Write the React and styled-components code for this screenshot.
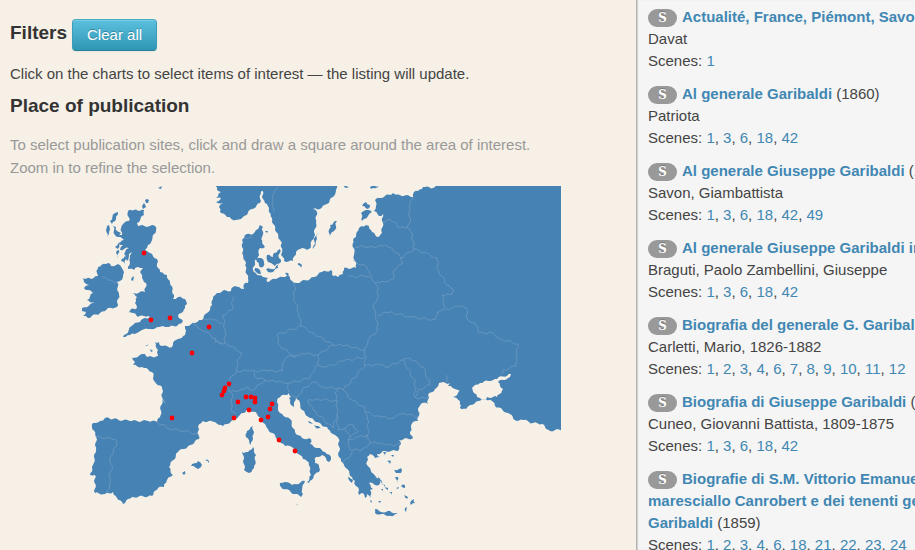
import React from "react";
import styled, { createGlobalStyle } from "styled-components";

const Global = createGlobalStyle`
  * { box-sizing: border-box; }
  body {
    margin: 0;
    background: #f6f0e6;
    color: #444;
    font: 15px/22px "Liberation Sans", Arial, sans-serif;
  }
`;

const Page = styled.div`
  display: grid;
  grid-template-columns: minmax(0, 1fr) 279px;
  height: 100vh;
  overflow: hidden;
`;

const Filters = styled.main`
  padding: 19px 10px 0;
`;

const Toolbar = styled.div`
  display: flex;
  align-items: flex-start;
  gap: 5px;
`;

const Heading = styled.h2`
  margin: 0;
  color: #333;
  font-size: 19px;
  line-height: 28px;
`;

const ClearButton = styled.button`
  height: 32px;
  padding: 0 14px;
  border: 1px solid;
  border-color: #4aa9c4 #3a9dba #26809b;
  border-radius: 4px;
  background: linear-gradient(#5bc0de, #2f96b4);
  box-shadow: inset 0 1px 0 rgba(255, 255, 255, 0.2), 0 1px 2px rgba(0, 0, 0, 0.05);
  color: #fff;
  font: inherit;
  text-shadow: 0 -1px 0 rgba(0, 0, 0, 0.25);
`;

const Intro = styled.p`
  margin: 12px 0 7px;
`;

const Hint = styled.p`
  max-width: 560px;
  margin: 13px 0 7px;
  color: #999;
  line-height: 23px;
`;

const Map = styled.svg`
  display: block;
  width: 100%;
  max-width: 551px;
  height: auto;
`;

const Listing = styled.aside`
  overflow: hidden;
  border-left: 1px solid #b5b3b1;
  background: #f5f5f5;
  box-shadow: inset 1px 0 1px #ccc;
`;

const Entries = styled.ul`
  width: 372px;
  margin: 0;
  padding: 6px 0 0 11px;
  list-style: none;
`;

const Entry = styled.li`
  margin-bottom: 11px;
`;

const Line = styled.div`
  min-height: 22px;
`;

const Badge = styled.span`
  display: inline-block;
  width: 29px;
  height: 18px;
  margin-right: 5px;
  border-radius: 9px;
  background: #999;
  color: #fff;
  font: bold 13px/18px "DejaVu Serif Condensed", "DejaVu Serif", serif;
  font-stretch: normal;
  text-align: center;
  text-shadow: 0 -1px 0 rgba(0, 0, 0, 0.25);
`;

const Link = styled.a`
  color: #4187b3;
  font-weight: ${(p) => (p.$title ? "bold" : "normal")};
  text-decoration: none;
`;

const mainland =
  "565,180 440,180 433,188 423,187 418,191 414,192 413,197 400,195 393,193 385,196 380,198 375,200 376,206 374,211 379,216 383,214 382,233 377,237 372,232 369,226 366,225 359,228 356,237 353,240 354,255 356,268 344,268 343,274 338,277 333,276 331,270 322,272 310,279 297,283 292,281 288,275 285,277 278,278 267,282 268,278 263,277 257,275 253,270 255,260 258,257 260,248 265,247 262,243 262,237 263,227 260,225 256,230 253,234 245,235 242,240 242,247 243,255 246,263 246,270 248,278 248,283 244,284 244,289 239,287 233,287 231,291 225,290 217,293 213,297 212,305 207,313 202,320 195,323 185,326 185,335 178,339 173,343 172,347 161,346 159,342 155,342 158,350 158,356 148,357 145,354 132,358 135,362 133,365 142,367 152,372 155,382 162,387 162,397 165,402 162,400 160,417 157,422 148,421 130,421 113,419 105,418 100,421 93,423 92,427 96,437 96,450 93,465 90,475 95,475 95,493 105,494 113,492 117,498 123,504 132,497 152,496 158,488 164,487 167,480 173,475 169,467 178,452 190,445 199,439 198,427 203,421 215,422 223,426 233,420 240,415 248,409 257,414 262,422 268,429 278,439 285,446 292,447 295,452 300,455 303,459 307,461 310,467 311,475 307,482 309,483 315,474 319,472 319,465 315,463 316,457 322,455 329,462 331,457 325,452 310,444 311,439 302,438 295,432 290,419 280,413 278,407 278,398 289,393 291,397 289,398 291,405 294,407 296,398 300,403 302,410 310,418 320,423 328,429 335,435 339,439 339,457 343,463 346,468 352,477 355,481 355,485 359,490 359,495 363,493 365,498 367,494 371,498 370,490 373,489 369,483 379,485 380,480 372,473 367,465 367,457 370,454 375,458 380,457 377,454 385,451 398,451 401,444 399,440 413,438 410,432 413,422 418,421 419,407 422,403 428,404 428,395 435,389 439,383 450,383 448,386 455,389 462,390 453,397 460,401 460,408 466,409 470,405 478,401 486,400 480,398 477,397 472,388 480,383 495,379 511,374 510,377 498,382 503,389 497,397 487,397 486,400 492,401 495,406 508,413 517,421 523,420 533,423 542,424 550,431 565,429";

const land = [
  mainland,
  "214,180 217,190 221,192 216,198 221,198 216,202 223,203 219,207 220,212 227,217 236,220 243,217 252,209 260,203 261,192 262,187 263,199 267,204 269,212 272,218 275,230 280,240 282,243 281,247 284,261 293,261 296,252 300,249 309,249 314,237 316,223 317,212 313,209 320,209 327,204 333,197 336,190 337,180",
  "128,211 134,210 144,210 144,215 137,223 138,226 155,226 156,230 152,240 148,245 145,250 150,253 157,259 158,268 160,272 167,275 170,283 174,295 173,299 178,297 185,299 187,304 185,308 178,316 183,321 177,326 167,327 159,327 150,329 142,330 137,333 130,335 123,337 133,325 140,322 145,318 150,317 144,316 138,317 133,313 127,313 131,309 137,308 135,303 137,297 132,293 145,292 146,283 142,278 140,272 143,268 138,267 134,270 128,269 130,258 132,252 129,254 127,261 126,255 124,260 125,252 129,248 120,250 123,245 119,244 124,240 118,237 122,235 121,228 124,223 129,221",
  "83,278 91,279 98,276 97,273 98,267 108,263 111,266 118,264 123,270 123,277 120,281 117,282 119,295 117,307 108,308 100,313 88,318 83,316 86,312 82,311 82,308 95,303 87,300 93,293 84,288 89,285 84,282",
  "337,221 330,225 329,237 335,230",
  "319,231 315,237 313,249 316,241",
  "361,213 366,210 372,212 368,216 362,221",
  "362,206 366,202 370,205 368,209",
  "298,263 302,265 301,268 298,265",
  "267,255 273,257 274,253 280,249 279,258 281,262 275,266 271,263 268,262",
  "256,259 261,258 264,262 263,267 259,266",
  "266,269 271,269 276,268 273,272 268,272",
  "255,268 260,270 261,274 256,272",
  "276,266 279,264 278,268 275,269",
  "282,249 284,257 281,255",
  "285,273 289,274 288,278",
  "253,426 253,438 251,445 246,437 247,431",
  "253,447 256,455 254,468 249,473 244,470 244,457 242,452 248,452",
  "280,483 285,482 292,485 305,481 302,490 303,494 301,497 295,494 281,487",
  "375,509 381,512 390,511 398,514 388,516 375,513",
  "191,466 198,461 202,465 198,469",
  "205,460 209,461 209,463",
  "182,473 185,471 184,475",
  "348,477 353,480 352,483",
  "366,471 374,475 381,479 378,476 383,485 377,478",
  "394,470 401,468 401,473 396,473",
  "395,477 398,477 397,483",
  "410,503 414,499 415,503 411,505",
  "387,461 391,461 390,464",
  "383,452 386,452 385,455",
  "391,455 394,455 393,457",
  "401,486 405,485 405,488",
  "381,483 385,485 385,487",
  "385,487 388,488 388,490",
  "389,492 392,492 392,495",
  "381,489 383,489 383,491",
  "396,488 399,487 398,489",
  "404,495 408,497 407,499",
  "405,508 407,507 406,512",
  "378,501 381,501 380,503",
  "370,500 372,501 371,503",
  "110,221 115,213 118,212 116,219 112,224",
  "107,226 109,225 109,234 107,237",
  "113,226 116,227 117,231 121,233 119,237 115,235",
  "115,247 121,242 118,249",
  "121,261 127,254 125,264",
  "116,253 119,250 118,258",
  "131,280 134,276 133,281",
  "142,206 144,203 146,207 143,209",
  "145,200 149,200 148,203 146,203",
  "158,188 162,186 161,189",
  "294,504 297,504 298,506",
  "301,398 307,409 304,410",
  "265,231 268,231 267,233",
  "344,463 346,465 346,468",
  "348,476 350,478 350,482",
  "145,345 149,344 147,346",
  "150,349 153,351 151,352",
  "345,184 349,187 344,187",
  "370,187 379,186 371,189",
  "308,421 313,424 309,423",
  "314,425 322,429 316,428",
];

const borders = [
  "278,187 274,191 273,200 273,212",
  "354,249 360,246 370,247 382,246 387,246 397,253 401,258",
  "383,222 390,219 400,228 408,227",
  "413,197 409,207 410,223 407,227 412,233 414,249 401,258 403,263 394,270 393,279 380,283 375,283 369,273 367,267 357,263 353,260",
  "348,277 365,276 370,276",
  "375,283 378,290 377,300 373,306 376,317 378,330 368,340 365,350 365,365",
  "414,249 430,255 437,258 438,270 447,285 453,289 451,295 442,295 445,308",
  "377,315 390,312 410,317 435,320 437,312 447,309 460,306 466,308 468,320 475,323 479,333 493,333 500,339 518,344 516,358 516,366 503,370 502,374",
  "295,282 294,298 299,313 301,326 277,335 279,345 295,357 302,353 318,355 333,345 313,333 301,326",
  "333,345 340,344 350,347 365,350",
  "318,355 318,365 327,367 343,361 365,357",
  "295,357 290,355 282,363 283,371 267,371 250,371 237,371",
  "215,338 215,342 227,344 242,353 237,360 237,371 230,378 227,387 230,392 240,390 247,387 253,390 265,380 255,377 253,371",
  "193,323 198,328 207,332 212,338 222,343",
  "203,318 213,320 223,323",
  "233,297 232,310 223,315 225,330 225,343",
  "230,392 233,397 231,403 232,412 236,414",
  "265,380 277,382 290,383 310,378 315,368 318,365",
  "289,392 288,383",
  "291,395 298,397 302,390 313,382 325,388 338,388 343,390 357,375 365,365 370,365 380,365 388,367 403,360",
  "308,400 316,399 337,401 337,415 333,428 313,410 308,400",
  "338,388 335,393 337,401",
  "343,390 352,400 365,408 365,412 380,417 393,418 403,413 418,417",
  "365,412 368,420 368,437",
  "337,415 338,430 345,428 352,424 358,432 350,437 345,428",
  "350,437 348,440 358,437 367,435 370,443 362,450 350,450 348,440",
  "353,452 343,463",
  "370,443 380,443 395,446 400,443",
  "403,360 415,382 415,397 418,399 428,397",
  "403,360 410,358 423,367 430,385 418,390 415,397",
  "96,437 115,439 117,445 110,457 112,470 109,476 110,483 107,493",
  "157,422 170,429 185,431 199,435",
  "102,277 110,280 117,282",
  "446,375 447,382",
  "162,397 166,403",
  "242,240 247,238 252,237",
];

const places = [
  [144, 253], [151, 320], [170, 318], [209, 327], [192, 353], [172, 418],
  [229, 384], [225, 388], [224, 391], [222, 395], [238, 402], [246, 397],
  [251, 397], [255, 398], [255, 402], [249, 410], [234, 418], [261, 420],
  [268, 417], [270, 409], [272, 404], [279, 440], [295, 451],
];

// Adds small alternating kinks between points so that outlines read as coast and rivers.
function rugged(text, closed) {
  const pts = text.split(" ").map((p) => p.split(",").map(Number));
  const out = [];
  pts.forEach(([x, y], i) => {
    out.push(`${x},${y}`);
    if (i === pts.length - 1 && !closed) return;
    const [nx, ny] = pts[(i + 1) % pts.length];
    const dx = nx - x;
    const dy = ny - y;
    const length = Math.hypot(dx, dy);
    const steps = Math.min(12, Math.floor(length / 2));
    for (let s = 1; s < steps; s += 1) {
      const t = s / steps;
      const kink = Math.sin(x * 12.9 + y * 78.2 + s * 37.7 * 1.3);
      const px = x + dx * t - (dy / length) * kink;
      const py = y + dy * t + (dx / length) * kink;
      out.push(`${px.toFixed(1)},${py.toFixed(1)}`);
    }
  });
  return out.join(" ");
}

const works = [
  { title: "Actualité, France, Piémont, Savoie", author: "Davat", scenes: [1] },
  { title: "Al generale Garibaldi", year: 1860, author: "Patriota", scenes: [1, 3, 6, 18, 42] },
  { title: "Al generale Giuseppe Garibaldi", year: 1860, author: "Savon, Giambattista", scenes: [1, 3, 6, 18, 42, 49] },
  { title: "Al generale Giuseppe Garibaldi inno", author: "Braguti, Paolo Zambellini, Giuseppe", scenes: [1, 3, 6, 18, 42] },
  { title: "Biografia del generale G. Garibaldi", author: "Carletti, Mario, 1826-1882", scenes: [1, 2, 3, 4, 6, 7, 8, 9, 10, 11, 12] },
  { title: "Biografia di Giuseppe Garibaldi", year: 1860, author: "Cuneo, Giovanni Battista, 1809-1875", scenes: [1, 3, 6, 18, 42] },
  { title: "Biografie di S.M. Vittorio Emanuele II, del maresciallo Canrobert e dei tenenti generali Garibaldi", year: 1859, scenes: [1, 2, 3, 4, 6, 18, 21, 22, 23, 24] },
];

function Work({ title, year, author, scenes }) {
  return (
    <Entry>
      <Line>
        <Badge>S</Badge>
        <Link $title href="#work">{title}</Link>
        {year && ` (${year})`}
      </Line>
      {author && <Line>{author}</Line>}
      <Line>
        Scenes:{" "}
        {scenes.map((n, i) => (
          <React.Fragment key={n}>
            {i > 0 && ", "}
            <Link href={`#scene-${n}`}>{n}</Link>
          </React.Fragment>
        ))}
      </Line>
    </Entry>
  );
}

export default function App() {
  return (
    <Page>
      <Global />
      <Filters>
        <Toolbar>
          <Heading>Filters</Heading>
          <ClearButton type="button">Clear all</ClearButton>
        </Toolbar>
        <Intro>Click on the charts to select items of interest — the listing will update.</Intro>
        <Heading as="h3">Place of publication</Heading>
        <Hint>
          To select publication sites, click and draw a square around the area of interest. Zoom in to refine the selection.
        </Hint>
        <Map viewBox="10 186 551 350" role="img" aria-label="Map of publication places in Europe">
          <g fill="#4682b4">
            {land.map((shape) => <polygon key={shape} points={rugged(shape, true)} />)}
          </g>
          <g fill="none" stroke="#7aa3c6" strokeWidth="0.6">
            {borders.map((line) => <polyline key={line} points={rugged(line, false)} />)}
          </g>
          <g fill="red">
            {places.map(([x, y]) => <circle key={`${x}-${y}`} cx={x} cy={y} r="2.4" />)}
          </g>
        </Map>
      </Filters>
      <Listing>
        <Entries>
          {works.map((work, i) => <Work key={i} {...work} />)}
        </Entries>
      </Listing>
    </Page>
  );
}
